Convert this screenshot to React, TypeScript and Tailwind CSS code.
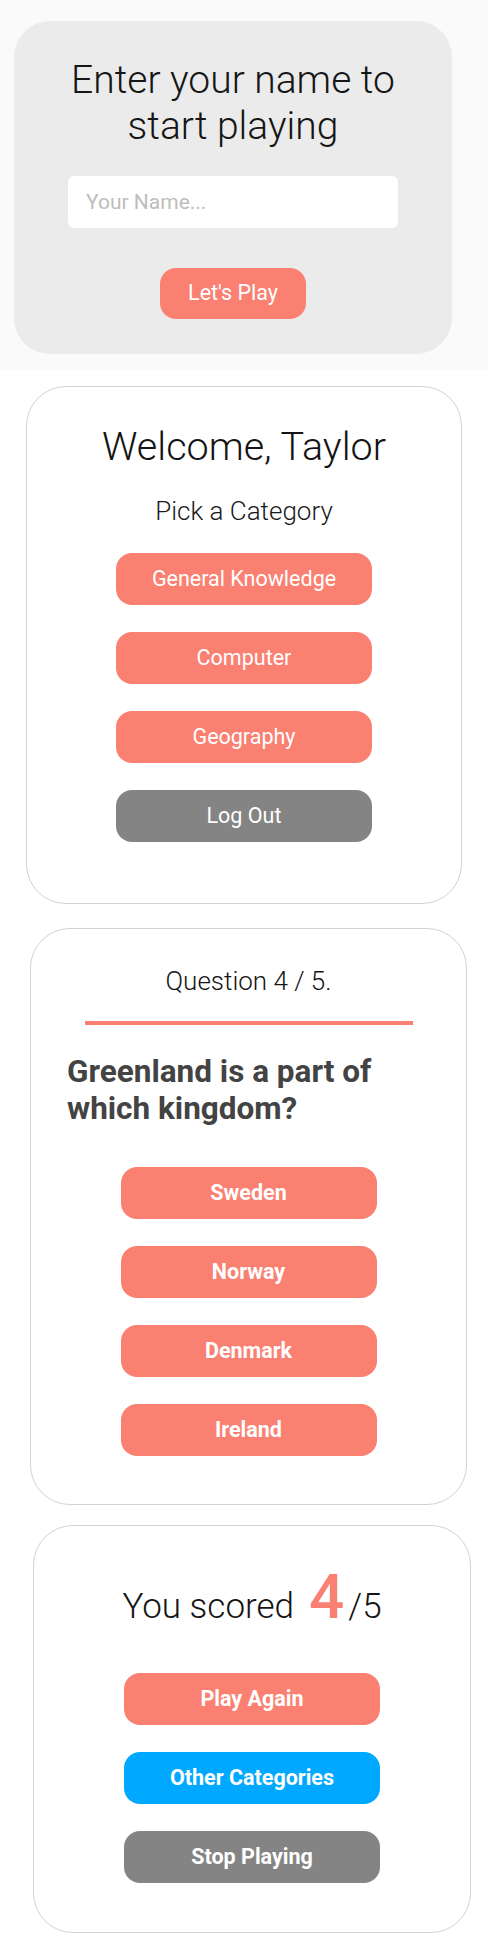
import React from "react";

const salmonBtn =
  "w-[256px] h-[52px] rounded-[16px] bg-[#fa8072] text-white text-[21.5px] flex items-center justify-center";

export default function App() {
  return (
    <div className="w-[488px] min-h-[1940px] bg-white font-['Roboto','Liberation_Sans',sans-serif] text-[#151515]">
      {/* Panel 1: name entry */}
      <div className="bg-[#fafafa] pt-[21px] pb-[16px] pl-[14px]">
        <div className="w-[438px] rounded-[36px] bg-[#ebebeb] pt-[36px] pb-[35px] flex flex-col items-center">
          <h1 className="text-[39px] leading-[46px] font-light text-center text-[#161616]">
            Enter your name to
            <br />
            start playing
          </h1>
          <input
            className="mt-[27px] w-[330px] h-[52px] rounded-[6px] bg-white px-[18px] text-[21px] text-[#333] placeholder:text-[#bdbdbd] outline-none border-0"
            placeholder="Your Name..."
          />
          <button className="mt-[40px] w-[146px] h-[51px] rounded-[16px] bg-[#fa8072] text-white text-[21.5px]">
            Let's Play
          </button>
        </div>
      </div>

      {/* Panel 2: categories */}
      <div className="ml-[26px] mt-[16px] w-[436px] rounded-[40px] border border-[#d2d2d2] bg-white pt-[37px] pb-[61px] flex flex-col items-center">
        <h2 className="text-[39.5px] leading-[46px] font-light text-[#141414]">Welcome, Taylor</h2>
        <p className="mt-[25px] text-[26px] leading-[32px] font-light text-[#1a1a1a]">Pick a Category</p>
        <div className="mt-[26px] flex flex-col gap-[27px]">
          <button className={salmonBtn}>General Knowledge</button>
          <button className={salmonBtn}>Computer</button>
          <button className={salmonBtn}>Geography</button>
          <button className="w-[256px] h-[52px] rounded-[16px] bg-[#848484] text-white text-[21.5px] flex items-center justify-center">
            Log Out
          </button>
        </div>
      </div>

      {/* Panel 3: question */}
      <div className="ml-[30px] mt-[24px] w-[437px] rounded-[40px] border border-[#d2d2d2] bg-white pt-[36px] pb-[48px] flex flex-col items-center">
        <p className="text-[26px] leading-[32px] font-light text-[#141414]">Question 4 / 5.</p>
        <div className="mt-[24px] w-[328px] h-[4px] bg-[#fa8072]" />
        <h3 className="mt-[28px] self-stretch px-[36px] text-[31.5px] leading-[37px] font-bold text-[#434343]">
          Greenland is a part of which kingdom?
        </h3>
        <div className="mt-[40px] flex flex-col gap-[27px]">
          <button className={salmonBtn + " font-bold"}>Sweden</button>
          <button className={salmonBtn + " font-bold"}>Norway</button>
          <button className={salmonBtn + " font-bold"}>Denmark</button>
          <button className={salmonBtn + " font-bold"}>Ireland</button>
        </div>
      </div>

      {/* Panel 4: score */}
      <div className="ml-[33px] mt-[20px] w-[438px] rounded-[40px] border border-[#d2d2d2] bg-white pt-[39px] pb-[49px] flex flex-col items-center">
        <div className="flex items-baseline justify-center h-[64px]">
          <span className="text-[35px] leading-[64px] font-light text-[#141414]">You scored</span>
          <span className="ml-[15px] text-[62px] leading-[64px] font-medium text-[#fa8072]">4</span>
          <span className="ml-[4px] text-[35px] leading-[64px] font-light text-[#141414]">/5</span>
        </div>
        <div className="mt-[44px] flex flex-col gap-[27px]">
          <button className={salmonBtn + " font-bold"}>Play Again</button>
          <button className="w-[256px] h-[52px] rounded-[16px] bg-[#00a8ff] text-white text-[21.5px] font-bold flex items-center justify-center">
            Other Categories
          </button>
          <button className="w-[256px] h-[52px] rounded-[16px] bg-[#848484] text-white text-[21.5px] font-bold flex items-center justify-center">
            Stop Playing
          </button>
        </div>
      </div>
    </div>
  );
}
